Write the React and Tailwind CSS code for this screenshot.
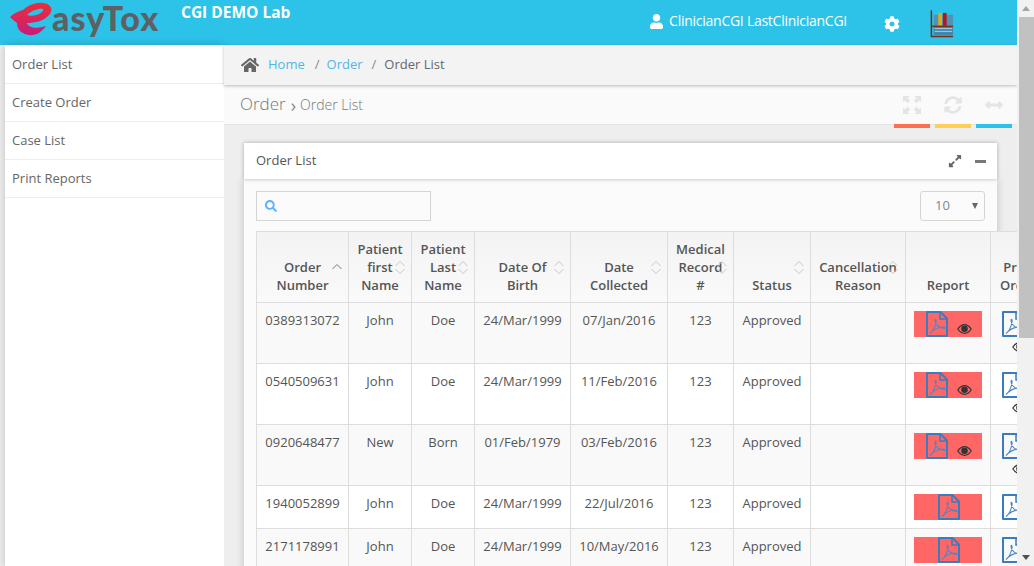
import React from 'react';
import { FaHome, FaUser, FaCog, FaSearch, FaSyncAlt, FaArrowsAltH, FaExpandAlt } from 'react-icons/fa';

const rows = [
  { id: '0389313072', first: 'John', last: 'Doe', dob: '24/Mar/1999', collected: '07/Jan/2016', eye: true },
  { id: '0540509631', first: 'John', last: 'Doe', dob: '24/Mar/1999', collected: '11/Feb/2016', eye: true },
  { id: '0920648477', first: 'New', last: 'Born', dob: '01/Feb/1979', collected: '03/Feb/2016', eye: true },
  { id: '1940052899', first: 'John', last: 'Doe', dob: '24/Mar/1999', collected: '22/Jul/2016', eye: false },
  { id: '2171178991', first: 'John', last: 'Doe', dob: '24/Mar/1999', collected: '10/May/2016', eye: false },
];

const columns = [
  { label: ['Order', 'Number'], w: 'w-[92px]', sort: 'asc', pos: 'right-[5px] top-[30px]' },
  { label: ['Patient', 'first', 'Name'], w: 'w-[63px]', sort: 'both', pos: 'right-[5px] top-[27px]' },
  { label: ['Patient', 'Last', 'Name'], w: 'w-[63px]', sort: 'both', pos: 'right-[5px] top-[27px]' },
  { label: ['Date Of', 'Birth'], w: 'w-[96px]', sort: 'both', pos: 'right-[5px] top-[27px]' },
  { label: ['Date', 'Collected'], w: 'w-[97px]', sort: 'both', pos: 'right-[5px] top-[27px]' },
  { label: ['Medical', 'Record', '#'], w: 'w-[66px]', sort: 'both', pos: 'right-[5px] top-[27px]' },
  { label: ['Status'], w: 'w-[77px]', sort: 'both', pos: 'right-[5px] top-[27px]' },
  { label: ['Cancellation', 'Reason'], w: 'w-[95px]', sort: 'both', pos: 'right-[6px] top-[27px]' },
  { label: ['Report'], w: 'w-[85px]' },
  { label: ['Print', 'Order'], w: 'w-[56px]' },
];

const cell = 'border border-[#dddddd] text-center align-top pt-[7px] leading-[20px]';

function SortIcon({ type }) {
  return (
    <svg width="12" height="17" viewBox="0 0 12 17" fill="none" stroke="#c8c8c8" strokeWidth="1">
      <path d="M1.5 7 L6 2.5 L10.5 7" stroke={type === 'asc' ? '#777' : '#c8c8c8'} />
      {type === 'both' && <path d="M1.5 10 L6 14.5 L10.5 10" />}
    </svg>
  );
}

function Logo() {
  return (
    <div className="flex items-start w-[171px] ml-[10px] h-[45px]">
      <svg width="42" height="38" viewBox="0 0 42 38" className="shrink-0">
        <defs>
          <linearGradient id="logoGrad" x1="0" y1="0" x2="0" y2="1">
            <stop offset="0" stopColor="#ec2f37" />
            <stop offset="1" stopColor="#c81c7c" />
          </linearGradient>
        </defs>
        <path
          fill="url(#logoGrad)"
          fillRule="evenodd"
          d="M0 17 C4 13 9 11 13 10 C18 5 27 2 33 3 C42 4 44 11 38 16 C33 21 25 23 17 23 C18 27 25 29 32 27 L36 26 C31 33 25 36 19 35 C11 34 7 29 7 23 C4 21 2 19 0 17 Z M17 15 C22 10 30 8 33 9 C34 11 30 14 26 15 C23 16 20 16 17 15 Z"
        />
      </svg>
      <span className="font-['Lato',sans-serif] font-black text-[34px] leading-[34px] text-[#5f6063] mt-[1px] tracking-[1.1px] whitespace-nowrap">
        asyTox
      </span>
    </div>
  );
}

function Bookshelf() {
  return (
    <svg width="24" height="28" viewBox="0 0 26 30" className="mt-[6px]">
      <rect x="4" y="5" width="21" height="12" fill="#4f93b8" />
      <rect x="9" y="3" width="4" height="14" fill="#e8a90c" />
      <rect x="14" y="3" width="4" height="14" fill="#b3181c" />
      <rect x="4" y="17" width="21" height="10" fill="#3f87ad" />
      <path d="M5 20 H24 M5 23 H24" stroke="#a9d3e6" strokeWidth="1" />
      <path d="M1.5 0 V28.5 H25" stroke="#6b3219" strokeWidth="1.6" fill="none" />
      <path d="M2 17.5 H25" stroke="#6b3219" strokeWidth="1.4" />
    </svg>
  );
}

function ExpandIcon() {
  return (
    <svg width="18" height="18" viewBox="0 0 18 18" fill="#e4e4e4">
      <path d="M0 0 H6.5 L4.6 1.9 L7.2 4.5 L4.5 7.2 L1.9 4.6 L0 6.5 Z" />
      <path d="M18 0 H11.5 L13.4 1.9 L10.8 4.5 L13.5 7.2 L16.1 4.6 L18 6.5 Z" />
      <path d="M0 18 H6.5 L4.6 16.1 L7.2 13.5 L4.5 10.8 L1.9 13.4 L0 11.5 Z" />
      <path d="M18 18 H11.5 L13.4 16.1 L10.8 13.5 L13.5 10.8 L16.1 13.4 L18 11.5 Z" />
    </svg>
  );
}

function PdfIcon() {
  return (
    <svg width="22" height="26" viewBox="0 0 22 26" fill="none" className="block">
      <path d="M1 1 H14.5 L21 7.5 V25 H1 Z" stroke="#3a7cbd" strokeWidth="2" strokeLinejoin="round" />
      <path d="M14 1 V8 H21" stroke="#3a7cbd" strokeWidth="1.5" />
      <path
        d="M4 22.5 C7 20.5 9 16 10 11 C10.5 8 9 7.5 9 9.5 C9 13 13 17 18 17.5 C19.5 17.5 19 16 17 16 C13 16 8 18 4 22.5 Z"
        stroke="#4d86c6"
        strokeWidth="1.1"
      />
    </svg>
  );
}

function Eye() {
  return (
    <svg width="15" height="10" viewBox="0 0 15 10" fill="none" className="block">
      <path d="M0.8 5 C3 1.8 5.2 0.7 7.5 0.7 C9.8 0.7 12 1.8 14.2 5 C12 8.2 9.8 9.3 7.5 9.3 C5.2 9.3 3 8.2 0.8 5 Z" stroke="#333" strokeWidth="1.2" />
      <circle cx="7.5" cy="4.8" r="3.3" fill="#333" />
    </svg>
  );
}

function ReportCell({ eye }) {
  return (
    <div className="relative h-[26px] w-[68px] bg-[#ff6666] mx-auto flex justify-center">
      {eye ? (
        <>
          <span className="absolute left-[12px] top-0"><PdfIcon /></span>
          <span className="absolute left-[43px] top-[13px]"><Eye /></span>
        </>
      ) : (
        <span className="ml-[2px]"><PdfIcon /></span>
      )}
    </div>
  );
}

function PreOrderCell({ eye }) {
  return (
    <div className="relative pl-[3px] text-left h-[26px]">
      <PdfIcon />
      {eye && <span className="absolute left-[13px] top-[31px]"><Eye /></span>}
    </div>
  );
}

function Table() {
  return (
    <table className="table-fixed w-[790px] text-[13px] text-[#555] border border-[#dddddd]">
      <colgroup>
        {columns.map((c, i) => <col key={i} className={c.w} />)}
      </colgroup>
      <thead>
        <tr className="bg-gradient-to-b from-[#f3f3f3] to-[#fafafa]">
          {columns.map((c, i) => (
            <th key={i} className="relative h-[70px] border border-[#dddddd] px-[4px] pt-[8px] pb-[8px] align-bottom font-semibold leading-[18px] text-center">
              {c.label.map((l, j) => <div key={j} className="whitespace-nowrap">{l}</div>)}
              {c.sort && <span className={`absolute ${c.pos}`}><SortIcon type={c.sort} /></span>}
            </th>
          ))}
        </tr>
      </thead>
      <tbody>
        {rows.map((r, i) => (
          <tr key={r.id} className={i % 2 === 0 ? 'bg-[#f9f9f9]' : 'bg-white'}>
            <td className={`${cell} ${r.eye ? 'h-[61px]' : 'h-[43px]'}`}>{r.id}</td>
            <td className={cell}>{r.first}</td>
            <td className={cell}>{r.last}</td>
            <td className={cell}>{r.dob}</td>
            <td className={cell}>{r.collected}</td>
            <td className={cell}>123</td>
            <td className={cell}>Approved</td>
            <td className={cell}></td>
            <td className="border border-[#dddddd] align-top pt-[8px]"><ReportCell eye={r.eye} /></td>
            <td className="border border-[#dddddd] align-top pt-[8px] pl-[8px]"><PreOrderCell eye={r.eye} /></td>
          </tr>
        ))}
      </tbody>
    </table>
  );
}

function Scrollbar() {
  return (
    <div className="w-[17px] shrink-0 bg-[#f1f1f1] flex flex-col items-end">
      <div className="h-[17px] w-full flex items-center justify-center">
        <div className="w-0 h-0 border-x-[4px] border-x-transparent border-b-[5px] border-b-[#a3a3a3]" />
      </div>
      <div className="h-[321px] w-[15px] bg-[#c1c1c1]" />
      <div className="flex-1" />
      <div className="h-[17px] w-full flex items-center justify-center">
        <div className="w-0 h-0 border-x-[4px] border-x-transparent border-t-[5px] border-t-[#505050]" />
      </div>
    </div>
  );
}

export default function App() {
  const sideItems = ['Order List', 'Create Order', 'Case List', 'Print Reports'];
  return (
    <div className="flex h-[566px] w-[1034px] overflow-hidden font-['Open_Sans',sans-serif]">
      <div className="flex-1 min-w-0 flex flex-col overflow-hidden">
        <header className="h-[45px] shrink-0 bg-[#2dc3e8] flex items-start text-white">
          <Logo />
          <div className="text-[15.5px] font-bold leading-[24px]">CGI DEMO Lab</div>
          <div className="ml-auto flex items-center h-[42px] mr-[63px]">
            <FaUser className="text-[15px] mr-[5px]" />
            <span className="text-[14px] tracking-[-0.26px] mr-[37px] -mt-[1px]">ClinicianCGI LastClinicianCGI</span>
            <FaCog className="text-[16px] mt-[6px] mr-[30px]" />
            <Bookshelf />
          </div>
        </header>

        <div className="flex-1 min-h-0 flex">
          <aside className="w-[224px] shrink-0 bg-[#eeeeee] pl-[5px]">
            <div className="h-full bg-white shadow-[0_0_8px_rgba(0,0,0,0.2)]">
              {sideItems.map((item, i) => (
                <div key={item} className={`${i === 0 ? 'h-[39px] pt-[1px]' : 'h-[38px]'} pl-[7px] flex items-center text-[13px] text-[#666] border-b border-[#eeeeee]`}>
                  {item}
                </div>
              ))}
            </div>
          </aside>

          <main className="flex-1 min-w-0 bg-[#eeeeee] flex flex-col">
            <div className="h-[40px] shrink-0 bg-[#f3f3f3] flex items-center pl-[17px] text-[13px] shadow-[0_1px_3px_rgba(0,0,0,0.25)] relative z-10">
              <FaHome className="text-[18px] text-[#666] mr-[9px]" />
              <span className="text-[#4db8e8]">Home</span>
              <span className="text-[#888] ml-[10px] mr-[7px]">/</span>
              <span className="text-[#4db8e8]">Order</span>
              <span className="text-[#888] ml-[9px] mr-[8px]">/</span>
              <span className="text-[#666]">Order List</span>
            </div>

            <div className="h-[40px] shrink-0 bg-[#fafafa] border-b border-[#e5e5e5] flex items-center pl-[16px] pr-[5px] relative">
              <span className="text-[17px] font-light text-[#777] -mt-[1px]">Order</span>
              <span className="text-[18px] leading-none text-[#888] ml-[5px] mr-[4px]">›</span>
              <span className="text-[14px] font-light text-[#777]">Order List</span>
              <div className="ml-auto flex gap-[5px] h-full">
                <div className="w-[36px] h-full relative flex justify-center pt-[11px]">
                  <ExpandIcon />
                  <div className="absolute left-0 right-0 -bottom-[4px] h-[4px] bg-[#fb6e52]" />
                </div>
                <div className="w-[36px] h-full relative flex justify-center pt-[11px] text-[18px] text-[#e4e4e4]">
                  <FaSyncAlt />
                  <div className="absolute left-0 right-0 -bottom-[4px] h-[4px] bg-[#ffce55]" />
                </div>
                <div className="w-[36px] h-full relative flex justify-center pt-[11px] text-[18px] text-[#e4e4e4]">
                  <FaArrowsAltH />
                  <div className="absolute left-0 right-0 -bottom-[4px] h-[4px] bg-[#2dc3e8]" />
                </div>
              </div>
            </div>

            <div className="flex-1 min-h-0 px-[20px] pt-[18px]">
              <div className="h-[36px] bg-white shadow-[0_0_4px_rgba(0,0,0,0.3)] flex items-center pl-[12px] pr-[11px] text-[13px] text-[#555] relative z-10">
                <span>Order List</span>
                <FaExpandAlt className="ml-auto text-[14px] text-[#666] mr-[13px]" />
                <div className="w-[11px] h-[3px] bg-[#777]" />
              </div>
              <div className="h-[500px] bg-[#fbfbfb] shadow-[0_0_8px_rgba(0,0,0,0.2)] pt-[12px] px-[12px]">
                <div className="flex items-center justify-between h-[30px] mb-[10px]">
                  <div className="w-[175px] h-[30px] border border-[#d5d5d5] bg-[#fbfbfb] flex items-center pl-[8px]">
                    <FaSearch className="text-[12px] text-[#5db2ff]" />
                  </div>
                  <div className="w-[65px] h-[30px] border border-[#d5d5d5] rounded-[3px] bg-[#fbfbfb] flex items-center pl-[14px] pr-[6px] text-[13px] text-[#858585]">
                    <span>10</span>
                    <div className="ml-auto w-0 h-0 border-x-[3.5px] border-x-transparent border-t-[6px] border-t-[#666]" />
                  </div>
                </div>
                <Table />
              </div>
            </div>
          </main>
        </div>
      </div>
      <Scrollbar />
    </div>
  );
}
